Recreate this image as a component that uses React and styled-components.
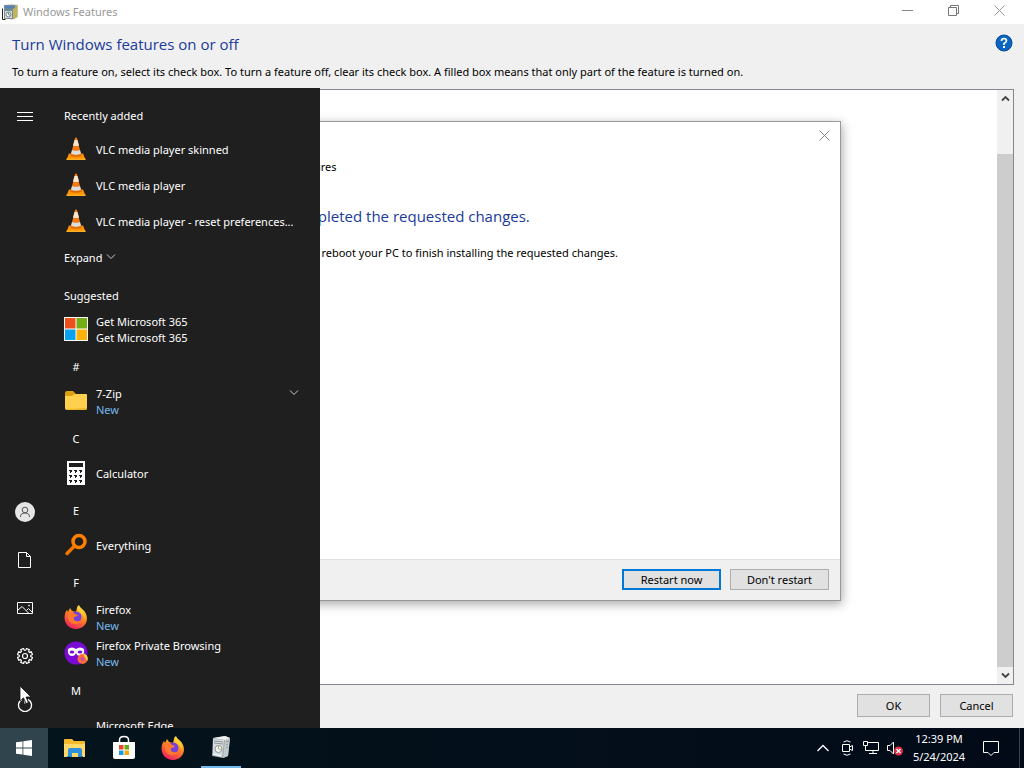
import styled, { createGlobalStyle } from "styled-components";

const color = {
  menu: "#1f1f1f",
  panel: "#f0f0f0",
  border: "#828790",
  heading: "#1a3a9c",
  accent: "#0078d7",
  link: "#76b9ed",
};

const GlobalStyle = createGlobalStyle`
  * {
    box-sizing: border-box;
  }

  body {
    margin: 0;
    overflow: hidden;
    font-family: "Noto Sans", "Open Sans", sans-serif;
    font-size: 11px;
    line-height: 16px;
    color: #000;
  }

  button {
    padding: 0;
    border: none;
    background: none;
    color: inherit;
    font: inherit;
  }

  h1, h2, h3, p, ul {
    margin: 0;
    padding: 0;
    font-weight: 400;
  }

  svg {
    display: block;
    flex: none;
  }
`;

const Desktop = styled.div`
  display: flex;
  flex-direction: column;
  height: 100vh;
`;

const Workspace = styled.main`
  position: relative;
  display: flex;
  flex: 1;
  min-height: 0;
`;

/* Windows Features window */

const Window = styled.section`
  display: flex;
  flex-direction: column;
  flex: 1;
  background: ${color.panel};
`;

const TitleBar = styled.header`
  display: flex;
  align-items: center;
  gap: 5px;
  height: 24px;
  padding-left: 2px;
  background: #fff;
  color: #999;
`;

const Title = styled.h1`
  flex: 1;
  font-size: 11px;
`;

const CaptionButton = styled.button`
  display: flex;
  justify-content: center;
  align-items: center;
  width: 46px;
  height: 20px;
  margin-left: -5px;

  &:last-child {
    margin-right: 2px;
  }
`;

const Intro = styled.div`
  display: flex;
  justify-content: space-between;
  align-items: flex-start;
  padding: 9px 11px 9px 12px;
`;

const Heading = styled.h2`
  color: ${color.heading};
  font-family: "Open Sans", sans-serif;
  font-size: 15px;
  line-height: 22px;
`;

const IntroText = styled.p`
  margin-top: 9px;
`;

const HelpButton = styled.button`
  display: flex;
  align-items: center;
  height: 20px;
`;

const FeatureList = styled.div`
  display: flex;
  justify-content: flex-end;
  flex: 1;
  margin: 0 10px 0 12px;
  border: 1px solid ${color.border};
  background: #fff;
`;

const ScrollBar = styled.div`
  display: flex;
  flex-direction: column;
  width: 16px;
  background: ${color.panel};
`;

const ScrollButton = styled.button`
  display: flex;
  justify-content: center;
  align-items: center;
  height: 17px;
`;

const ScrollTrack = styled.div`
  flex: 1;
  padding-top: 47px;
`;

const ScrollThumb = styled.div`
  height: 100%;
  background: #cdcdcd;
`;

const WindowFooter = styled.footer`
  display: flex;
  justify-content: flex-end;
  gap: 10px;
  padding: 9px 11px 11px;
`;

const PushButton = styled.button`
  width: ${(props) => (props.$wide ? "99px" : "73px")};
  height: ${(props) => (props.$wide ? "21px" : "23px")};
  border: ${(props) =>
    props.$focused ? `2px solid ${color.accent}` : "1px solid #adadad"};
  background: #e1e1e1;
`;

/* Restart dialog */

const DialogLayer = styled.div`
  position: absolute;
  inset: 0;
  display: flex;
  justify-content: center;
  align-items: flex-start;
  padding-top: 121px;
`;

const Dialog = styled.section`
  display: flex;
  flex-direction: column;
  width: 658px;
  border: 1px solid #999;
  background: #fff;
  box-shadow: 1px 3px 10px rgba(0, 0, 0, 0.35);
`;

const DialogTop = styled.div`
  display: flex;
  justify-content: flex-end;
  height: 28px;
  padding-right: 10px;
`;

const DialogCaption = styled.div`
  display: flex;
  align-items: center;
  gap: 6px;
  padding: 9px 0 0 36px;
`;

const DialogBody = styled.div`
  min-height: 384px;
  padding: 30px 36px;
`;

const DialogMessage = styled.p`
  margin-top: 18px;
  padding-left: 4px;
`;

const DialogFooter = styled.footer`
  display: flex;
  justify-content: flex-end;
  gap: 9px;
  padding: 9px 11px 10px;
  border-top: 1px solid #dfdfdf;
  background: ${color.panel};
`;

/* Start menu */

const StartMenu = styled.nav`
  position: absolute;
  left: 0;
  top: 88px;
  bottom: 0;
  display: flex;
  width: 320px;
  overflow: hidden;
  background: ${color.menu};
  color: #fff;
`;

const Rail = styled.div`
  display: flex;
  flex-direction: column;
  flex: none;
  width: 50px;
  padding-top: 4px;
`;

const RailButton = styled.button`
  display: flex;
  justify-content: center;
  align-items: center;
  height: 48px;
  margin-top: ${(props) => (props.$pushDown ? "auto" : "0")};
`;

const AppList = styled.ul`
  flex: 1;
  padding: 8px 18px 0 14px;
  list-style: none;
`;

const Row = styled.li`
  display: flex;
  align-items: center;
  height: 36px;
`;

const GroupTitle = styled(Row)`
  padding-top: 4px;
`;

const Letter = styled(Row)`
  justify-content: center;
  width: 24px;
  padding-top: 2px;
`;

const AppButton = styled.button`
  display: flex;
  align-items: center;
  flex: 1;
  gap: 8px;
  text-align: left;

  > svg {
    margin-bottom: 2px;
  }
`;

const ExpandButton = styled(AppButton)`
  gap: 4px;
`;

const AppText = styled.span`
  display: flex;
  flex-direction: column;
  flex: 1;
  white-space: nowrap;
`;

const NewTag = styled.span`
  color: ${color.link};
`;

/* Taskbar */

const Taskbar = styled.footer`
  display: flex;
  height: 40px;
  background: linear-gradient(90deg, #04141c, #020a18);
  color: #fff;
`;

const TaskButton = styled.button`
  display: flex;
  justify-content: center;
  align-items: center;
  width: 49px;
  height: 40px;
`;

const StartButton = styled(TaskButton)`
  width: 48px;
  margin-right: 2px;
  background: #30444e;
`;

const RunningButton = styled(TaskButton)`
  width: 40px;
  margin-left: 4px;
  border-bottom: 2px solid ${color.link};
`;

const Tray = styled.div`
  display: flex;
  align-items: center;
  margin-left: auto;
`;

const TrayButton = styled.button`
  display: flex;
  justify-content: center;
  align-items: center;
  width: 24px;
  height: 40px;
`;

const Clock = styled.button`
  display: flex;
  flex-direction: column;
  gap: 2px;
  align-items: center;
  width: 64px;
`;

const ActionButton = styled(TrayButton)`
  width: 40px;
  margin-right: 8px;
`;

const ShowDesktop = styled.button`
  width: 5px;
  height: 40px;
  border-left: 1px solid #3b424c;
`;

const Pointer = styled.svg`
  position: absolute;
  left: 19px;
  top: 685px;
  pointer-events: none;
`;

function FeaturesIcon() {
  return (
    <svg width="16" height="16" viewBox="0 0 16 16">
      <path d="M2 1L10 .5l5.500.5v12l-4.500 2.500-9-1z" fill="#929a9e" />
      <path d="M11 1.500l4.500-.5v12L11 15z" fill="#c2b45c" />
      <path d="M2.500 1.500h11l-1 3h-10z" fill="#5880b8" />
      <path d="M2.500 5h8v9.500h-8z" fill="#d5dde0" stroke="#69757b" strokeWidth=".7" />
      <path d="M3 5h7v2H3z" fill="#668d9b" />
      <circle cx="6.500" cy="10.500" r="2.500" fill="#f4f6f6" stroke="#758087" />
      <path d="M6.500 8.500v2l2 1" fill="none" stroke="#4a9662" />
      <path d="M.5 4.500v11h3" fill="none" stroke="#222" />
    </svg>
  );
}

function ServerIcon() {
  return (
    <svg width="24" height="24" viewBox="0 0 24 24">
      <path d="M4 3l12-2 5 2-2 18-5 2-11-2z" fill="#a0a8ac" />
      <path d="M4 3l12-2 5 2-5 2z" fill="#eef1f2" />
      <path d="M16 5l5-2-2 18-5 2z" fill="#c3cacd" />
      <path d="M4 4l11 1-2 17-9-2z" fill="#d7dddf" />
      <path d="M5 6l9 1M5 8l9 1M17 7l3-1M17 10l2-1M17 13l2-1" stroke="#8b979c" />
      <circle cx="9.500" cy="14" r="3.500" fill="#f3f5f6" stroke="#8b979c" />
      <path d="M9.500 11v3l3 1" fill="none" stroke="#b3ad78" />
      <path d="M4 19l8 2" stroke="#fff" />
    </svg>
  );
}

function ConeIcon() {
  return (
    <svg width="24" height="24" viewBox="0 0 24 24">
      <path d="M5 16.500h14l2.500 6h-19z" fill="#ff9400" />
      <path d="M2.500 21.500h19V23h-19z" fill="#ffad22" />
      <path d="M7.500 16.500h9l1.500 2q-6 2.500-12 0z" fill="#d96a08" />
      <path d="M11 1Q12 0 13 1l4 16.500q-5 1.500-10 0z" fill="#f47a14" />
      <path d="M10.500 3h3l1.500 5.500q-3 1.200-6 0z" fill="#f7e6d0" />
      <path d="M8 13q4 1.700 8 0l1 3.500q-5 2.500-10 0z" fill="#dedede" />
    </svg>
  );
}

function MicrosoftIcon() {
  return (
    <svg width="24" height="24" viewBox="0 0 24 24">
      <path d="M0 0h24v24H0z" fill="#fff" />
      <path d="M1 1h10.500v10.500H1z" fill="#ed501d" />
      <path d="M12.500 1H23v10.500H12.500z" fill="#75ad16" />
      <path d="M1 12.500h10.500V23H1z" fill="#08a1ef" />
      <path d="M12.500 12.500H23V23H12.500z" fill="#fdb10b" />
    </svg>
  );
}

function FolderIcon() {
  return (
    <svg width="24" height="24" viewBox="0 0 24 24">
      <path d="M1 4q0-2 2-2h6l3 3h9q2 0 2 2v3H1z" fill="#dda012" />
      <path d="M1 7h7l3-2h11q1 0 1 1v13q0 2-2 2H3q-2 0-2-2z" fill="#ffd04d" />
      <path d="M2 20q0 1 1 1h18q2 0 2-2z" fill="#edb72c" />
    </svg>
  );
}

function CalculatorIcon() {
  const keys = [];
  [9, 14, 19].forEach((y) =>
    [5, 10, 15].forEach((x) =>
      keys.push(<path key={`${x}-${y}`} d={`M${x} ${y}h3v2h-1v1h-1v-2h-1z`} fill={color.menu} />)
    )
  );
  return (
    <svg width="24" height="24" viewBox="0 0 24 24">
      <path d="M3 0h18v24H3z" fill="#fff" />
      <path d="M5 2h14v4H5z" fill={color.menu} />
      {keys}
    </svg>
  );
}

function SearchIcon() {
  return (
    <svg width="24" height="24" viewBox="0 0 24 24" fill="none">
      <path d="M10.500 13L3 20.500" stroke="#f47600" strokeWidth="3.500" strokeLinecap="round" />
      <circle cx="15" cy="8.500" r="6" stroke="#ff8000" strokeWidth="3.500" />
    </svg>
  );
}

function FirefoxIcon({ id }) {
  return (
    <svg width="24" height="24" viewBox="0 0 24 24">
      <defs>
        <linearGradient id={id} x1=".8" y1="0" x2=".3" y2="1">
          <stop offset="0" stopColor="#fff04a" />
          <stop offset=".45" stopColor="#ff8a20" />
          <stop offset="1" stopColor="#ee1c64" />
        </linearGradient>
      </defs>
      <path
        d="M15 0c1 3 4 4 6 7 5 8 0 17-9 17C4 24-1 17 1 9c.5-2 1-3 2-4l1 2 2-4 2 3 4 1 1-4q0-2 2-3z"
        fill={`url(#${id})`}
      />
      <circle cx="12" cy="12" r="5.500" fill="#7541dc" />
      <path d="M4 8q4-3 7 1l3 1q-1 2-4 2-1 3 2 4 3 1 5-1-2 5-7 4-7-1-6-11z" fill="#ff782b" />
      <path d="M15 1c1 5 7 6 6 13-1-4-3-5-5-7q-3-2-1-6z" fill="#ffd22e" />
    </svg>
  );
}

function PrivateIcon() {
  return (
    <svg width="24" height="24" viewBox="0 0 24 24">
      <circle cx="12" cy="12" r="11.500" fill="#7a0bd4" />
      <path
        d="M4 8q4-3 8 0 4-3 8 0 1 7-4 7-3 0-4-3-1 3-4 3-5 0-4-7z"
        fill="#fff"
      />
      <ellipse cx="8" cy="11" rx="2.300" ry="1.500" fill="#7a0bd4" />
      <ellipse cx="16" cy="11" rx="2.300" ry="1.500" fill="#7a0bd4" />
      <circle cx="18.500" cy="18" r="5" fill="#ff6a3c" />
      <path d="M19 12q6 2 4.500 8l-3-4z" fill="#ffd03a" />
      <circle cx="18.500" cy="18" r="1.800" fill="#b04fc8" />
    </svg>
  );
}

function ExplorerIcon() {
  return (
    <svg width="24" height="24" viewBox="0 0 24 24">
      <path d="M1 4q0-1 1-1h7l2 2h10q1 0 1 1v15H1z" fill="#f5b92d" />
      <path d="M1 8h21v13H1z" fill="#ffd969" />
      <path d="M5 14q0-2 2-2h10q2 0 2 2v7h-4v-4H9v4H5z" fill="#2f91dc" />
      <path d="M4 20h4v1H4zM16 20h4v1h-4z" fill="#187bc5" />
    </svg>
  );
}

function StoreIcon() {
  return (
    <svg width="24" height="26" viewBox="0 0 24 26">
      <path d="M7.500 7V5Q7.500 1.500 12 1.500T16.500 5v2" fill="none" stroke="#fff" strokeWidth="1.500" />
      <path d="M1 7h22v15q0 2-2 2H3q-2 0-2-2z" fill="#fff" />
      <path d="M7 10h4.500v4.500H7z" fill="#e34b24" />
      <path d="M12.500 10H17v4.500h-4.500z" fill="#65a913" />
      <path d="M7 15.500h4.500V20H7z" fill="#159de3" />
      <path d="M12.500 15.500H17V20h-4.500z" fill="#f5a80d" />
    </svg>
  );
}

function LineIcon({ d, width = 16, height = 16, stroke = "#fff", strokeWidth = 1, children }) {
  return (
    <svg
      width={width}
      height={height}
      viewBox={`0 0 ${width} ${height}`}
      fill="none"
      stroke={stroke}
      strokeWidth={strokeWidth}
    >
      <path d={d} />
      {children}
    </svg>
  );
}

function GearIcon() {
  const teeth = [];
  for (let i = 0; i < 8; i++) {
    const a = (i * Math.PI) / 4 + Math.PI / 8;
    const point = (r, offset) =>
      `${(8 + r * Math.cos(a + offset)).toFixed(2)} ${(8 + r * Math.sin(a + offset)).toFixed(2)}`;
    teeth.push(`${point(5.8, -0.27)}L${point(7.6, -0.2)}L${point(7.6, 0.2)}L${point(5.8, 0.27)}`);
  }
  return (
    <LineIcon strokeWidth={1.2} d={`M${teeth.join("L")}Z`}>
      <circle cx="8" cy="8" r="2.500" />
    </LineIcon>
  );
}

function AppRow({ icon, name, note, isNew, chevron }) {
  return (
    <Row>
      <AppButton>
        {icon}
        <AppText>
          <span>{name}</span>
          {note && <span>{note}</span>}
          {isNew && <NewTag>New</NewTag>}
        </AppText>
        {chevron && (
          <LineIcon width={16} height={26} stroke="#ccc" d="M4 2.500l4 4 4-4" />
        )}
      </AppButton>
    </Row>
  );
}

function StartPanel() {
  return (
    <StartMenu aria-label="Start">
      <Rail>
        <RailButton aria-label="Menu">
          <LineIcon height={11} d="M0 1.500h16M0 5.500h16M0 9.500h16" />
        </RailButton>
        <RailButton aria-label="Account" $pushDown>
          <svg width="20" height="20" viewBox="0 0 20 20" fill="none" stroke="#555">
            <circle cx="10" cy="10" r="10" fill="#e6e6e6" stroke="none" />
            <circle cx="10" cy="8" r="2.800" />
            <path d="M5.500 15q0-4 4.500-4t4.500 4" />
          </svg>
        </RailButton>
        <RailButton aria-label="Documents">
          <LineIcon d="M1.500.5h8l4 4v11h-12zM9.500.5v4h4" />
        </RailButton>
        <RailButton aria-label="Pictures">
          <LineIcon d="M.5 2.500h15v11H.5zM.5 10.500l4.500-4 7 7M9.500 10.500l2-2 4 4">
            <circle cx="12" cy="5.500" r=".5" />
          </LineIcon>
        </RailButton>
        <RailButton aria-label="Settings">
          <GearIcon />
        </RailButton>
        <RailButton aria-label="Power">
          <LineIcon strokeWidth={1.3} d="M5 3.300a6.500 6.500 0 1 0 6 0M8 .5v7" />
        </RailButton>
      </Rail>
      <AppList>
        <GroupTitle>Recently added</GroupTitle>
        <AppRow icon={<ConeIcon />} name="VLC media player skinned" />
        <AppRow icon={<ConeIcon />} name="VLC media player" />
        <AppRow icon={<ConeIcon />} name="VLC media player - reset preferences..." />
        <Row>
          <ExpandButton>
            Expand
            <LineIcon width={10} height={8} stroke="#ccc" d="M1 1.500l4 4 4-4" />
          </ExpandButton>
        </Row>
        <GroupTitle>Suggested</GroupTitle>
        <AppRow icon={<MicrosoftIcon />} name="Get Microsoft 365" note="Get Microsoft 365" />
        <Letter>#</Letter>
        <AppRow icon={<FolderIcon />} name="7-Zip" isNew chevron />
        <Letter>C</Letter>
        <AppRow icon={<CalculatorIcon />} name="Calculator" />
        <Letter>E</Letter>
        <AppRow icon={<SearchIcon />} name="Everything" />
        <Letter>F</Letter>
        <AppRow icon={<FirefoxIcon id="menuFox" />} name="Firefox" isNew />
        <AppRow icon={<PrivateIcon />} name="Firefox Private Browsing" isNew />
        <Letter>M</Letter>
        <AppRow icon={<svg width="24" height="24" />} name="Microsoft Edge" />
      </AppList>
    </StartMenu>
  );
}

function RestartDialog() {
  return (
    <DialogLayer>
      <Dialog role="dialog" aria-label="Windows Features">
        <DialogTop>
          <button aria-label="Close dialog">
            <LineIcon width={11} height={12} stroke="#888" d="M.5.5l10 10M10.500.5l-10 10" />
          </button>
        </DialogTop>
        <DialogCaption>
          <FeaturesIcon />
          <span>Windows Features</span>
        </DialogCaption>
        <DialogBody>
          <Heading>Windows completed the requested changes.</Heading>
          <DialogMessage>
            Windows needs to reboot your PC to finish installing the requested changes.
          </DialogMessage>
        </DialogBody>
        <DialogFooter>
          <PushButton $wide $focused>
            Restart now
          </PushButton>
          <PushButton $wide>Don't restart</PushButton>
        </DialogFooter>
      </Dialog>
    </DialogLayer>
  );
}

function FeaturesWindow() {
  return (
    <Window>
      <TitleBar>
        <FeaturesIcon />
        <Title>Windows Features</Title>
        <CaptionButton aria-label="Minimize">
          <LineIcon width={11} height={13} stroke="#888" d="M0 4.500h11" />
        </CaptionButton>
        <CaptionButton aria-label="Restore">
          <LineIcon width={11} height={15} stroke="#777" d="M.5 2.500h8v8h-8zM2.500 2.500v-2h8v8h-2" />
        </CaptionButton>
        <CaptionButton aria-label="Close">
          <LineIcon width={11} height={15} stroke="#999" d="M.5.5l10 10M10.500.5l-10 10" />
        </CaptionButton>
      </TitleBar>
      <Intro>
        <div>
          <Heading>Turn Windows features on or off</Heading>
          <IntroText>
            To turn a feature on, select its check box. To turn a feature off, clear its check box.
            A filled box means that only part of the feature is turned on.
          </IntroText>
        </div>
        <HelpButton aria-label="Help">
          <svg width="18" height="18" viewBox="0 0 18 18">
            <circle cx="9" cy="9" r="8" fill="#0865c2" stroke="#064a94" />
            <path
              d="M6.500 7Q6.500 4.500 9 4.500T11.500 7Q11.500 8 9 9.500V11"
              fill="none"
              stroke="#fff"
              strokeWidth="1.700"
            />
            <path d="M8 12h2v2H8z" fill="#fff" />
          </svg>
        </HelpButton>
      </Intro>
      <FeatureList>
        <ScrollBar>
          <ScrollButton aria-label="Scroll up">
            <LineIcon width={9} height={7} stroke="#444" strokeWidth={1.8} d="M1 5.500L4.500 2 8 5.500" />
          </ScrollButton>
          <ScrollTrack>
            <ScrollThumb />
          </ScrollTrack>
          <ScrollButton aria-label="Scroll down">
            <LineIcon width={9} height={7} stroke="#444" strokeWidth={1.8} d="M1 1.500L4.500 5 8 1.500" />
          </ScrollButton>
        </ScrollBar>
      </FeatureList>
      <WindowFooter>
        <PushButton>OK</PushButton>
        <PushButton>Cancel</PushButton>
      </WindowFooter>
    </Window>
  );
}

function BottomBar() {
  return (
    <Taskbar>
      <StartButton aria-label="Start">
        <svg width="16" height="16" viewBox="0 0 16 16" fill="#fff">
          <path d="M0 2.300L6.500 1.400v6.200H0zM7.300 1.200L16 0v7.600H7.300zM0 8.400h6.500v6.200L0 13.700zM7.300 8.400H16V16l-8.700-1.200z" />
        </svg>
      </StartButton>
      <TaskButton aria-label="File Explorer">
        <ExplorerIcon />
      </TaskButton>
      <TaskButton aria-label="Microsoft Store">
        <StoreIcon />
      </TaskButton>
      <TaskButton aria-label="Firefox">
        <FirefoxIcon id="barFox" />
      </TaskButton>
      <RunningButton aria-label="Windows Features">
        <ServerIcon />
      </RunningButton>
      <Tray>
        <TrayButton aria-label="Show hidden icons">
          <LineIcon width={12} height={8} strokeWidth={1.3} d="M.5 7L6 1.500 11.500 7" />
        </TrayButton>
        <TrayButton aria-label="Meet Now">
          <LineIcon d="M3.500 4.500h7v7h-7zM10.500 7l3-1.500v5l-3-1.500M4.500 2q3.500-2.500 7 0M4.500 14q3.500 2.500 7 0" />
        </TrayButton>
        <TrayButton aria-label="Network">
          <LineIcon d="M4.500 2.500h11v8h-11M10 10.500v3M6 13.500h8M.5 1.500h4v4h-4zM2.500 5.500v5H5" />
        </TrayButton>
        <TrayButton aria-label="Volume muted">
          <LineIcon d="M.5 5.500h2.500L6.500 2v12L3 10.500H.5z">
            <circle cx="11.500" cy="11" r="4.500" fill="#dc3045" stroke="none" />
            <path d="M9.500 9l4 4M13.500 9l-4 4" strokeWidth="1.300" />
          </LineIcon>
        </TrayButton>
        <Clock>
          <span>12:39 PM</span>
          <span>5/24/2024</span>
        </Clock>
        <ActionButton aria-label="Notifications">
          <LineIcon height={17} d="M.5 1.500h15v11h-4.500l-3 3-3-3H.5z" />
        </ActionButton>
        <ShowDesktop aria-label="Show desktop" />
      </Tray>
    </Taskbar>
  );
}

function App() {
  return (
    <>
      <GlobalStyle />
      <Desktop>
        <Workspace>
          <FeaturesWindow />
          <RestartDialog />
          <StartPanel />
          <Pointer width="13" height="20" viewBox="0 0 13 20">
            <path
              d="M1 1v15l3.500-3.200L7 18.500l2.500-1L7 12h5z"
              fill="#fff"
              stroke="#111"
              strokeWidth=".8"
            />
          </Pointer>
        </Workspace>
        <BottomBar />
      </Desktop>
    </>
  );
}

export default App;
